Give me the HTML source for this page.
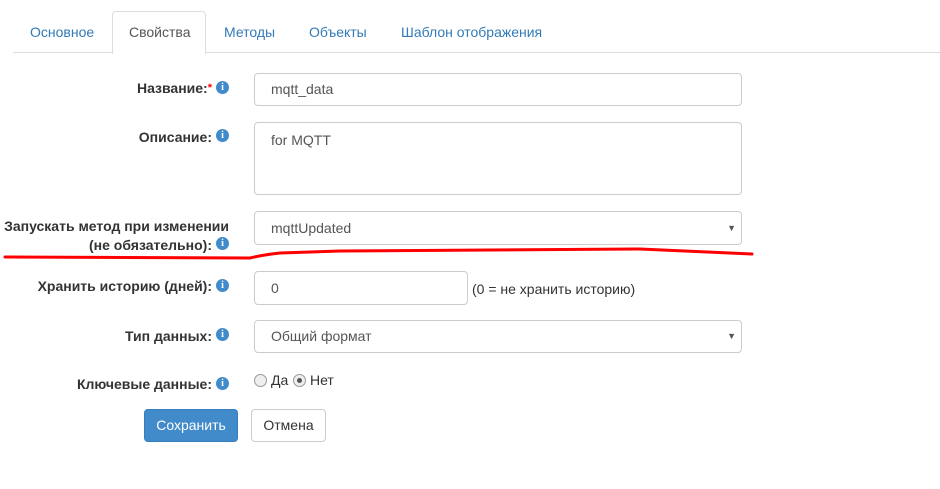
<!DOCTYPE html>
<html><head><meta charset="utf-8"><style>
body{margin:0;width:940px;height:489px;background:#fff;font-family:"Liberation Sans",sans-serif;font-size:14px;color:#333;position:relative;overflow:hidden}
.a{position:absolute}
.tab{position:absolute;top:24px;color:#337ab7;font-size:14px}
.lbl{position:absolute;right:728px;font-weight:bold;text-align:right;line-height:20px;white-space:nowrap}
.ic{position:absolute;width:13px;height:13px;border-radius:50%;background:#428bca;color:#fff;font-size:10px;font-weight:bold;line-height:13px;text-align:center;font-family:"Liberation Serif",serif}
.inp{position:absolute;border:1px solid #ccc;border-radius:4px;box-sizing:border-box;padding-left:16px;color:#555;background:#fff}
.arr{position:absolute;right:5px;font-size:9px;color:#555}
</style></head><body>
<div class="a" style="left:13px;top:52px;width:927px;height:1px;background:#ddd"></div>
<div class="a" style="left:112px;top:11px;width:92px;height:42px;border:1px solid #ddd;border-bottom:none;border-radius:4px 4px 0 0;background:#fff"></div>
<div class="tab" style="left:30px">Основное</div>
<div class="tab" style="left:129px;color:#555">Свойства</div>
<div class="tab" style="left:224px">Методы</div>
<div class="tab" style="left:309px">Объекты</div>
<div class="tab" style="left:401px">Шаблон отображения</div>

<div class="lbl" style="top:78px">Название:<span style="color:red;font-size:11px;vertical-align:top">*</span></div>
<div class="ic" style="left:216px;top:81px">i</div>
<div class="inp" style="left:254px;top:73px;width:488px;height:33px;line-height:31px">mqtt_data</div>

<div class="lbl" style="top:127px">Описание:</div>
<div class="ic" style="left:216px;top:129px">i</div>
<div class="inp" style="left:254px;top:122px;width:488px;height:73px;padding-top:8px;line-height:18px">for MQTT</div>

<div class="lbl" style="top:216px;right:711px">Запускать метод при изменении</div>
<div class="lbl" style="top:235px">(не обязательно):</div>
<div class="ic" style="left:216px;top:237px">i</div>
<div class="inp" style="left:254px;top:211px;width:488px;height:34px;line-height:32px">mqttUpdated<span class="arr">▼</span></div>

<div class="lbl" style="top:276px">Хранить историю (дней):</div>
<div class="ic" style="left:216px;top:279px">i</div>
<div class="inp" style="left:254px;top:271px;width:214px;height:34px;line-height:32px">0</div>
<div class="a" style="left:472px;top:281px">(0 = не хранить историю)</div>

<div class="lbl" style="top:326px">Тип данных:</div>
<div class="ic" style="left:216px;top:328px">i</div>
<div class="inp" style="left:254px;top:320px;width:488px;height:33px;line-height:31px">Общий формат<span class="arr">▼</span></div>

<div class="lbl" style="top:374px">Ключевые данные:</div>
<div class="ic" style="left:216px;top:377px">i</div>
<div class="a" style="left:254px;top:374px;width:11px;height:11px;border:1px solid #999;border-radius:50%;background:#eee"></div>
<div class="a" style="left:271px;top:372px">Да</div>
<div class="a" style="left:293px;top:374px;width:11px;height:11px;border:1px solid #999;border-radius:50%;background:#eee"></div>
<div class="a" style="left:297px;top:378px;width:5px;height:5px;border-radius:50%;background:#555"></div>
<div class="a" style="left:310px;top:372px">Нет</div>

<div class="a" style="left:144px;top:409px;width:94px;height:33px;background:#428bca;border:1px solid #357ebd;border-radius:4px;box-sizing:border-box;color:#fff;text-align:center;line-height:31px">Сохранить</div>
<div class="a" style="left:251px;top:409px;width:75px;height:33px;background:#fff;border:1px solid #ccc;border-radius:4px;box-sizing:border-box;text-align:center;line-height:31px">Отмена</div>

<svg class="a" style="left:0;top:0" width="940" height="489"><path d="M5 257 L250 258 Q262 255 280 253 L340 251 L640 249 L752 254" fill="none" stroke="#f00" stroke-width="3" stroke-linecap="round"/></svg>
</body></html>
